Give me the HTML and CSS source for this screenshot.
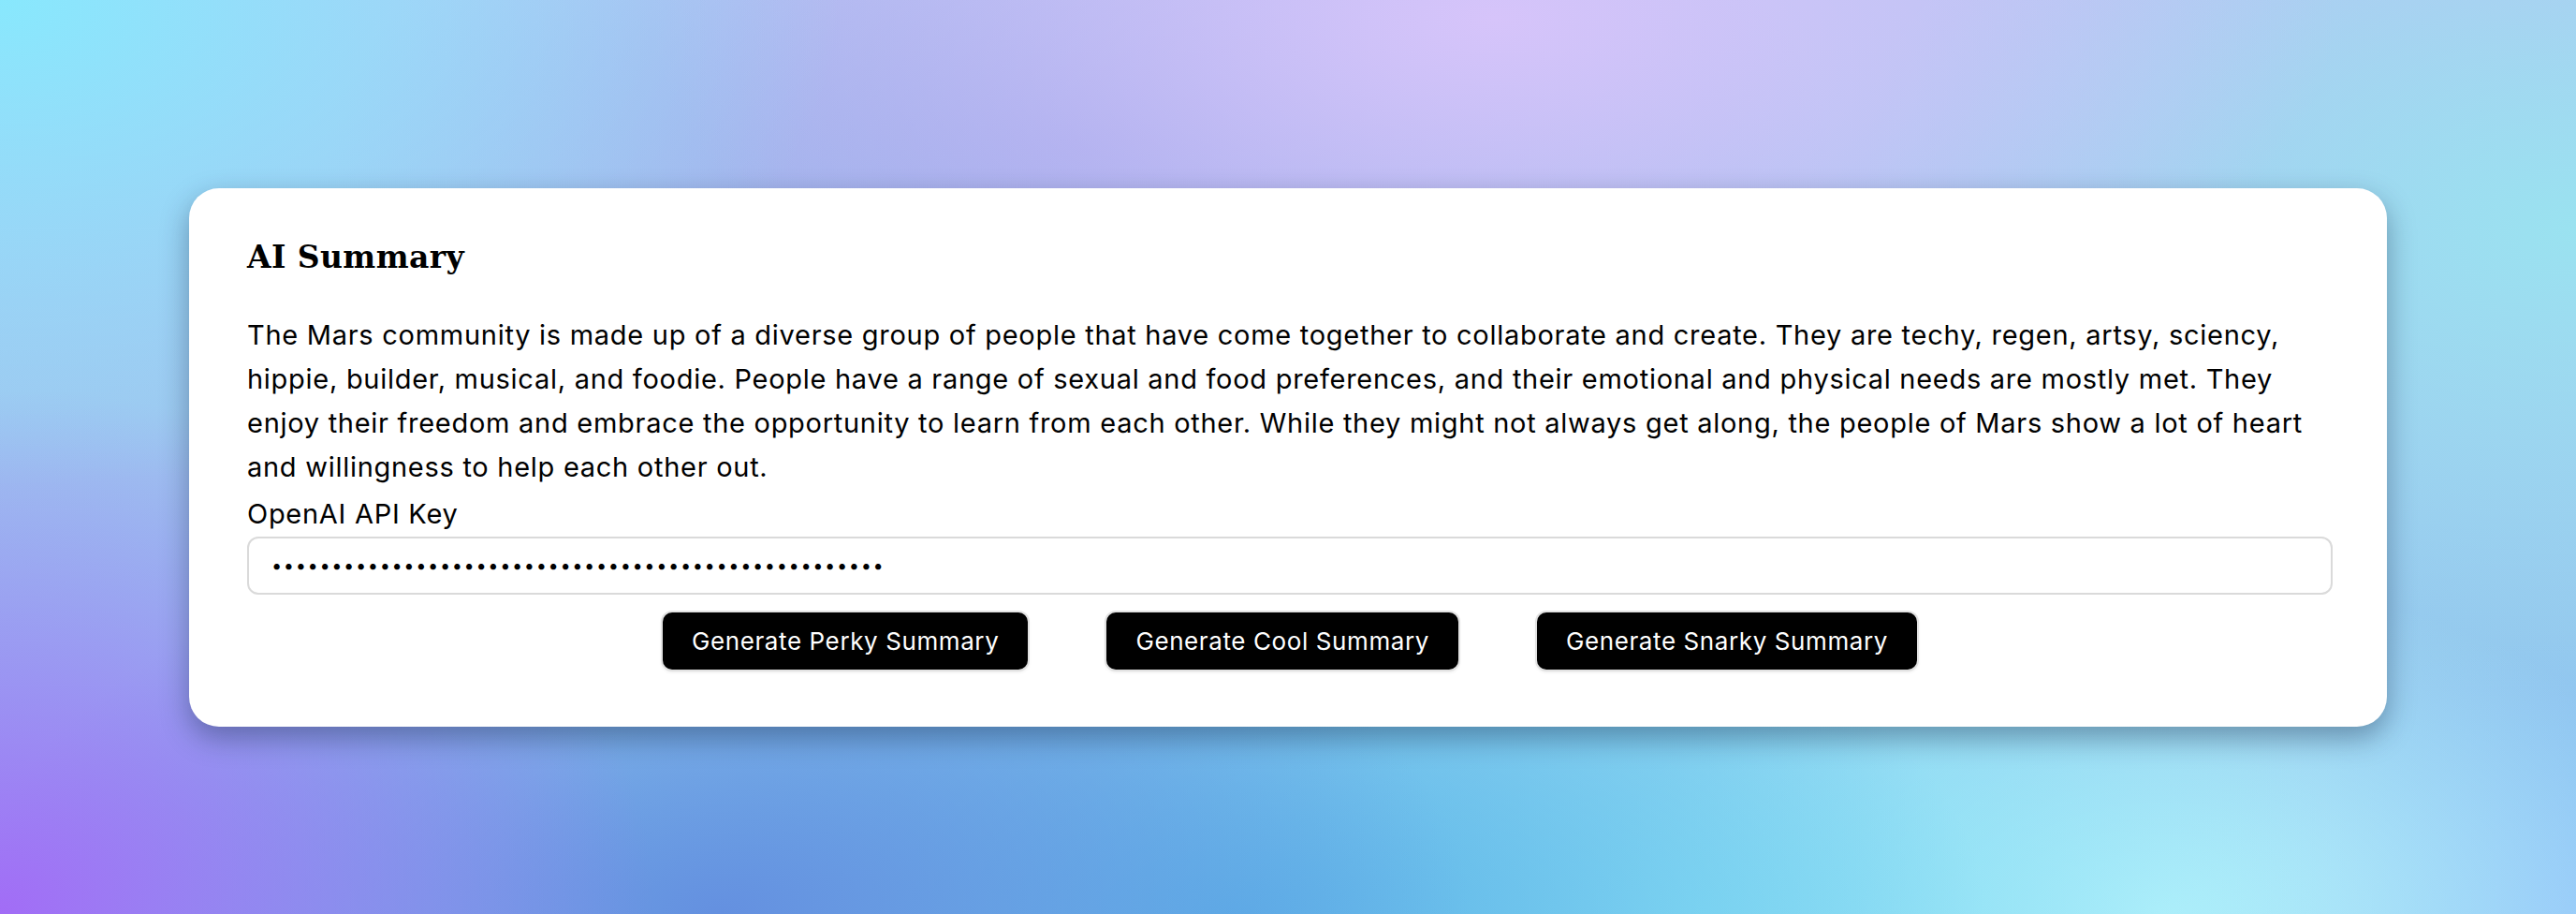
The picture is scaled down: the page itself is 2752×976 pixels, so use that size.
FILE: index.html
```html
<!DOCTYPE html>
<html lang="en">
<head>
<meta charset="utf-8">
<title>AI Summary</title>
<link rel="stylesheet" href="styles.css">
</head>
<body>
  <main class="page">
    <section class="card">
      <h2 class="card-title">AI Summary</h2>
      <p class="summary">The Mars community is made up of a diverse group of people that have come together to collaborate and create. They are techy, regen, artsy, sciency, hippie, builder, musical, and foodie. People have a range of sexual and food preferences, and their emotional and physical needs are mostly met. They enjoy their freedom and embrace the opportunity to learn from each other. While they might not always get along, the people of Mars show a lot of heart and willingness to help each other out.</p>
      <label class="key-label" for="api-key">OpenAI API Key</label>
      <input class="key-input" id="api-key" type="password" value="sk-abcdefghijklmnopqrstuvwxyz0123456789ABCDEFGHIJKL">
      <div class="actions">
        <button class="btn" type="button">Generate Perky Summary</button>
        <button class="btn" type="button">Generate Cool Summary</button>
        <button class="btn" type="button">Generate Snarky Summary</button>
      </div>
    </section>
  </main>
</body>
</html>
```

FILE: styles.css
```css
html, body {
  margin: 0;
  padding: 0;
}

body {
  width: 2752px;
  height: 976px;
  overflow: hidden;
  font-family: Inter, "Noto Sans", sans-serif;
  background:
    radial-gradient(ellipse 900px 520px at 0% 0%, #88e8fd 0%, rgba(136, 232, 253, 0) 100%),
    radial-gradient(ellipse 900px 420px at 58% 2%, #d6c4fa 0%, rgba(214, 196, 250, 0) 100%),
    radial-gradient(ellipse 800px 360px at 42% 16%, #9ea8ea 0%, rgba(158, 168, 234, 0) 100%),
    radial-gradient(ellipse 800px 500px at 100% 25%, #9ae2f0 0%, rgba(154, 226, 240, 0) 100%),
    radial-gradient(ellipse 700px 560px at 0% 100%, #a26cf6 0%, rgba(162, 108, 246, 0) 100%),
    radial-gradient(ellipse 800px 420px at 28% 100%, #6490e0 0%, rgba(100, 144, 224, 0) 100%),
    radial-gradient(ellipse 800px 400px at 48% 100%, #5cb4e8 0%, rgba(92, 180, 232, 0) 100%),
    radial-gradient(ellipse 700px 400px at 66% 100%, #8ce4f6 0%, rgba(140, 228, 246, 0) 100%),
    radial-gradient(ellipse 600px 360px at 84% 100%, #b8f2fc 0%, rgba(184, 242, 252, 0) 100%),
    radial-gradient(ellipse 400px 300px at 100% 100%, #90c0f8 0%, rgba(144, 192, 248, 0) 100%),
    linear-gradient(180deg, #b4c4f2 0%, #86c8ec 100%);
}

.page {
  height: 976px;
  display: flex;
  align-items: center;
  justify-content: center;
}

.card {
  box-sizing: border-box;
  width: 2348px;
  height: 575px;
  padding: 55px 58px 0 62px;
  background: #ffffff;
  border-radius: 32px;
  box-shadow: 0 12px 30px rgba(20, 40, 70, 0.4);
  display: flex;
  flex-direction: column;
}

.card-title {
  margin: 0;
  font-family: "DejaVu Serif", serif;
  font-weight: 700;
  font-size: 33px;
  letter-spacing: 0.4px;
  line-height: 37px;
  color: #000;
}

.summary {
  margin: 41px 0 0;
  font-size: 29px;
  letter-spacing: 0.72px;
  line-height: 47px;
  color: #000;
}

.key-label {
  padding-top: 3px;
  font-size: 29px;
  letter-spacing: 0.72px;
  line-height: 47px;
  color: #000;
}

.key-input {
  box-sizing: border-box;
  margin: 1px 0 0;
  width: 100%;
  height: 62px;
  padding: 0 24px;
  border: 2px solid #dadada;
  border-radius: 12px;
  font-family: Inter, sans-serif;
  font-size: 20px;
  letter-spacing: 1.6px;
  color: #000;
  background: #fff;
  outline: none;
}

.actions {
  margin-top: 19px;
  display: flex;
  justify-content: center;
  gap: 84px;
}

.btn {
  height: 61px;
  padding: 0 31px;
  border: none;
  border-radius: 10px;
  background: #000;
  color: #fff;
  font-family: Inter, sans-serif;
  font-size: 26px;
  letter-spacing: 0.6px;
  box-shadow: 0 0 0 2px #e2e2e2, 0 2px 4px rgba(0, 0, 0, 0.12);
  cursor: pointer;
}
```
